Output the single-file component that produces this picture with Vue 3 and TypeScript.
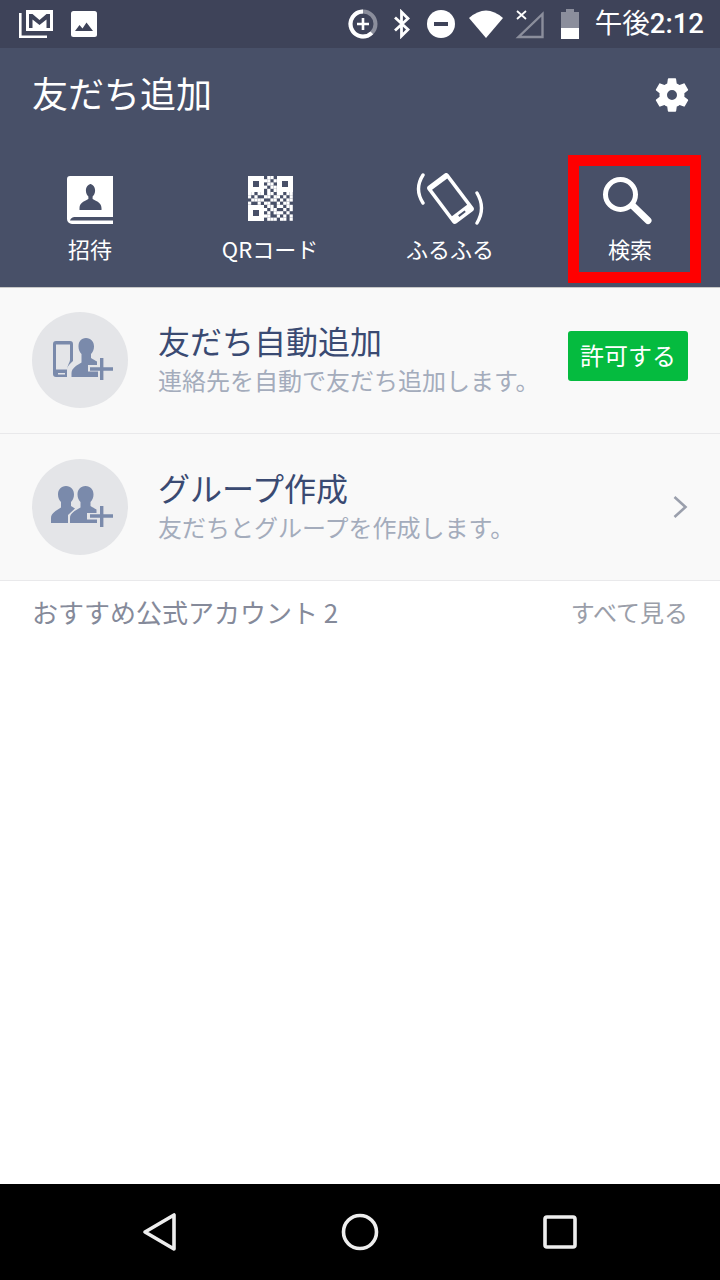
<script setup lang="ts">
const tabs = [
  { id: 'invite', label: '招待' },
  { id: 'qr', label: 'QRコード' },
  { id: 'shake', label: 'ふるふる' },
  { id: 'search', label: '検索' },
]
// QR modules between the three finder squares, [col, row] on a 14x14 grid
const qrRows: Record<number, number[]> = {
  0: [6, 7],
  1: [5, 6, 8],
  2: [6, 7],
  3: [5, 7, 8],
  4: [6, 8],
  5: [0, 1, 3, 4, 6, 7, 9, 10, 12, 13],
  6: [0, 2, 5, 6, 8, 9, 11, 13],
  7: [1, 2, 3, 4, 7, 8, 10, 12, 13],
  8: [0, 3, 5, 6, 9, 11, 12],
  9: [6, 7, 9, 10, 12, 13],
  10: [5, 7, 8, 11, 13],
  11: [6, 8, 9, 10, 12],
  12: [5, 6, 9, 11, 13],
  13: [6, 7, 8, 10, 11, 13],
}
const qrCells = Object.entries(qrRows).flatMap(([row, cols]) =>
  cols.map((col) => ({ x: col * 3.2, y: Number(row) * 3.2 })),
)
</script>

<template>
  <div class="screen">
    <div class="status-bar">
      <svg class="st-icon" width="36" height="30" viewBox="0 0 36 30">
        <path d="M2.300 4v23.700H29" fill="none" stroke="#fff" stroke-width="2.600" />
        <path d="M8 1h27v21H8zM11 5v14h3.500v-8.500l7 5.500 7-5.500V19H32V5h-3.500l-7 6-7-6z" fill="#fff" fill-rule="evenodd" />
      </svg>
      <svg class="st-icon st-photo" width="26" height="26" viewBox="0 0 26 26">
        <rect width="26" height="26" rx="2.500" fill="#fff" />
        <path d="M4 20l4.500-6 3 3.500 4-6L22 20z" fill="#3e4359" />
      </svg>
      <div class="st-spacer"></div>
      <svg class="st-icon" width="30" height="30" viewBox="0 0 30 30">
        <circle cx="15" cy="15" r="12.500" fill="none" stroke="#8b8e9c" stroke-width="4" />
        <path d="M15 2.500A12.500 12.500 0 1 0 23.800 23.900" fill="none" stroke="#fff" stroke-width="4" />
        <path d="M15 9v12M9 15h12" stroke="#fff" stroke-width="2.600" />
      </svg>
      <svg class="st-icon st-bt" width="20" height="30" viewBox="0 0 20 30">
        <path d="M3 8.500l13 12-6.500 6.500V3l6.500 6.500-13 12" fill="none" stroke="#fff" stroke-width="2.800" />
      </svg>
      <svg class="st-icon st-dnd" width="28" height="28" viewBox="0 0 28 28">
        <circle cx="14" cy="14" r="14" fill="#fff" />
        <rect x="7" y="12" width="14" height="4" fill="#3e4359" />
      </svg>
      <svg class="st-icon st-wifi" width="34" height="28" viewBox="0 0 34 28">
        <path d="M0 8Q17-7 34 8L17 28z" fill="#fff" />
      </svg>
      <svg class="st-icon st-signal" width="30" height="30" viewBox="0 0 30 30">
        <path d="M27.500 5v23H3.500z" fill="none" stroke="#8b8e9c" stroke-width="2.400" />
        <path d="M2 2l9 8M11 2l-9 8" stroke="#fff" stroke-width="1.800" />
      </svg>
      <svg class="st-icon st-batt" width="20" height="30" viewBox="0 0 20 30">
        <path d="M6 0h8v3h5v27H1V3h5z" fill="#8b8e9c" />
        <rect x="1" y="19" width="18" height="11" fill="#fff" />
      </svg>
      <span class="st-time">午後<b>2:12</b></span>
    </div>

    <header class="header">
      <div class="title-row">
        <h1 class="title">友だち追加</h1>
        <svg class="gear" width="40" height="40" viewBox="0 0 24 24">
          <path fill="#fff" fill-rule="evenodd" d="M19.400 13c.04-.33.06-.66.06-1s-.02-.67-.06-1l2.100-1.650c.2-.15.25-.42.12-.64l-2-3.460c-.12-.22-.39-.3-.61-.22l-2.490 1c-.52-.4-1.080-.73-1.690-.98l-.38-2.650C14.460 2.180 14.250 2 14 2h-4c-.25 0-.46.18-.49.420l-.38 2.650c-.61.25-1.170.59-1.690.98l-2.490-1c-.23-.09-.49 0-.61.220l-2 3.460c-.13.220-.07.490.12.640L4.570 11c-.04.330-.07.670-.07 1s.03.670.07 1l-2.110 1.650c-.19.150-.25.420-.12.640l2 3.460c.12.220.39.300.61.220l2.490-1c.52.400 1.080.730 1.690.980l.38 2.650c.03.240.24.420.49.420h4c.25 0 .46-.18.49-.42l.38-2.650c.61-.25 1.170-.59 1.690-.98l2.490 1c.23.090.49 0 .61-.22l2-3.460c.12-.22.07-.49-.12-.64L19.400 13zM12 15a3 3 0 1 1 0-6 3 3 0 0 1 0 6z" />
        </svg>
      </div>
      <nav class="tabs">
        <div v-for="tab in tabs" :key="tab.id" class="tab" :class="tab.id">
          <div class="tab-icon">
            <svg v-if="tab.id === 'invite'" width="46" height="48" viewBox="0 0 46 48">
              <path d="M3 0h43v41H8a5 5 0 0 0-5 3.500h43V48H5a5 5 0 0 1-5-5V3a3 3 0 0 1 3-3z" fill="#fff" />
              <path d="M23 7.500c3.500 0 5.600 3 5.600 6.500 0 3-1.300 5-2.500 6v2.500c2 1.500 8.900 3 8.900 9v2H13v-2c0-6 6.900-7.500 8.900-9V20c-1.200-1-2.500-3-2.500-6 0-3.500 2.100-6.500 5.600-6.500z" fill="#485068" transform="translate(-.5 .5)" />
            </svg>
            <svg v-else-if="tab.id === 'qr'" width="45" height="45" viewBox="0 0 45 45">
              <g fill="#fff">
                <path fill-rule="evenodd" d="M0 0h16v16H0zM5 5v6h6V5zM29 0h16v16H29zM34 5v6h6V5zM0 29h16v16H0zM5 34v6h6v-6z" />
                <rect v-for="(cell, i) in qrCells" :key="i" :x="cell.x" :y="cell.y" width="3.200" height="3.200" />
              </g>
            </svg>
            <svg v-else-if="tab.id === 'shake'" width="72" height="56" viewBox="0 0 72 56">
              <g transform="rotate(-37 36.500 25.500)">
                <rect x="23.500" y="2" width="26" height="47" rx="3" fill="#fff" />
                <rect x="27" y="7.500" width="19" height="33" fill="#485068" />
                <rect x="32.500" y="43.500" width="8" height="2" fill="#485068" />
              </g>
              <path d="M9 2Q0 16 9 30M63 20Q72 35 63 50" fill="none" stroke="#fff" stroke-width="3.400" stroke-linecap="round" />
            </svg>
            <svg v-else width="50" height="50" viewBox="0 0 50 50">
              <circle cx="17.500" cy="18.500" r="15" fill="none" stroke="#fff" stroke-width="5" />
              <path d="M30 30l15 14.500" stroke="#fff" stroke-width="7" stroke-linecap="round" />
            </svg>
          </div>
          <span class="tab-label">{{ tab.label }}</span>
        </div>
      </nav>
    </header>

    <main class="content">
      <section class="row first">
        <div class="avatar">
          <svg class="avatar-phone" width="62" height="44" viewBox="0 0 62 44">
            <path fill="#7a8aab" fill-rule="evenodd" d="M4 3h14a3 3 0 0 1 3 3v17c-2 2-5 4-6 8v8H4a3 3 0 0 1-3-3V6a3 3 0 0 1 3-3zM4 6.500v25h11c.5-4.500 3-7.500 3-9.500V6.500zM6 35v1.500h7V35z" />
            <path fill="#7a8aab" d="M34 0c5 0 8 3.600 8 8.500 0 3.200-1.200 5.800-3 7.500v4c2 1.500 4 2.300 6 3.500V27h-9v6.500h10V39H19.500v-4c0-5 6-8 10-10.500V16c-1.800-1.700-3-4.300-3-7.500C26.500 3.600 29 0 34 0z" />
            <path d="M38 31h23M49.700 20v22" stroke="#7a8aab" stroke-width="3.400" fill="none" />
          </svg>
        </div>
        <div class="row-text">
          <div class="row-title">友だち自動追加</div>
          <div class="row-sub">連絡先を自動で友だち追加します。</div>
        </div>
        <button class="allow">許可する</button>
      </section>
      <section class="row second">
        <div class="avatar">
          <svg class="avatar-group" width="62" height="42" viewBox="0 0 62 42">
            <path fill="#7a8aab" d="M15 0c5 0 8 3.600 8 8.500 0 3.200-1.200 5.800-3 7.500v4l4 2.500-7 6.500v8H0v-5c0-5 6-8 10-10.500V16c-1.800-1.700-3-4.300-3-7.500C7 3.600 10 0 15 0z" />
            <path fill="#7a8aab" d="M34.500 0c5 0 8 3.600 8 8.500 0 3.200-1.200 5.800-3 7.500v4c2 1.500 4 2.300 6 3.500V27H36v6.500h10V37H19v-5c0-5 6-8 10.500-10.500V16c-1.800-1.700-3-4.300-3-7.500C26.500 3.600 29.500 0 34.500 0z" />
            <path d="M39 30h23M50.700 20v21" stroke="#7a8aab" stroke-width="3.400" fill="none" />
          </svg>
        </div>
        <div class="row-text">
          <div class="row-title">グループ作成</div>
          <div class="row-sub">友だちとグループを作成します。</div>
        </div>
        <svg class="chevron" width="16" height="24" viewBox="0 0 16 24">
          <path d="M2.500 2l11 10-11 10" fill="none" stroke="#9a9fac" stroke-width="2.600" />
        </svg>
      </section>
      <div class="section-head">
        <span class="section-title">おすすめ公式アカウント 2</span>
        <span class="section-link">すべて見る</span>
      </div>
    </main>

    <footer class="nav-bar">
      <svg width="36" height="40" viewBox="0 0 36 40">
        <path d="M32 3v34L3 20z" fill="none" stroke="#eee" stroke-width="3.600" stroke-linejoin="round" />
      </svg>
      <svg width="40" height="40" viewBox="0 0 40 40">
        <circle cx="20" cy="20" r="16.500" fill="none" stroke="#eee" stroke-width="3.600" />
      </svg>
      <svg width="36" height="36" viewBox="0 0 36 36">
        <rect x="3" y="3" width="30" height="30" rx="2" fill="none" stroke="#eee" stroke-width="3.600" />
      </svg>
    </footer>
  </div>
</template>

<style>
html, body {
  margin: 0;
  background: #fff;
}
</style>

<style scoped>
.screen {
  width: 720px;
  height: 1280px;
  display: flex;
  flex-direction: column;
  font-family: "Noto Sans CJK JP", "Liberation Sans", sans-serif;
  overflow: hidden;
  background: #fff;
}

.status-bar {
  height: 48px;
  background: #3e4359;
  display: flex;
  align-items: center;
  padding: 0 16px 0 18px;
  box-sizing: border-box;
  flex-shrink: 0;
}

.st-icon {
  flex-shrink: 0;
}

.st-photo {
  margin-left: 17px;
}

.st-spacer {
  flex: 1;
}

.st-bt {
  margin-left: 14px;
}

.st-dnd {
  margin-left: 15px;
}

.st-wifi {
  margin-left: 14px;
}

.st-signal {
  margin-left: 12px;
}

.st-batt {
  margin-left: 15px;
}

.st-time {
  margin-left: 15px;
  color: #fff;
  font-size: 27.5px;
  line-height: 48px;
  font-family: Roboto, "Noto Sans CJK JP", sans-serif;
  white-space: nowrap;
}

.st-time b {
  font-weight: 500;
}

.header {
  height: 239px;
  background: #485068;
  flex-shrink: 0;
  display: flex;
  flex-direction: column;
  box-sizing: border-box;
}

.title-row {
  height: 94px;
  display: flex;
  align-items: center;
  justify-content: space-between;
  padding: 0 28px 0 32px;
  flex-shrink: 0;
}

.title {
  margin: 0 0 6px;
  color: #fff;
  font-size: 36px;
  font-weight: 400;
  line-height: 50px;
}

.gear {
  flex-shrink: 0;
}

.tabs {
  display: grid;
  grid-template-columns: repeat(4, 180px);
  flex: 1;
}

.tab {
  display: flex;
  flex-direction: column;
  align-items: center;
  position: relative;
}

.tab-icon {
  height: 96px;
  padding-top: 34px;
  box-sizing: border-box;
  display: flex;
  justify-content: center;
}

.tab.shake svg {
  margin-top: -3px;
}

.tab.search svg {
  margin-left: -4px;
}

.tab.search::after {
  content: "";
  position: absolute;
  left: 28px;
  right: 19px;
  top: 13px;
  bottom: 4px;
  border: 11px solid #ff0000;
}

.tab-label {
  color: #fff;
  font-size: 22px;
  line-height: 30px;
  margin-top: -5px;
}

.content {
  flex: 1;
  display: flex;
  flex-direction: column;
  border-top: 1px solid #c8c8c8;
}

.row {
  height: 146px;
  background: #f9f9f9;
  border-bottom: 1px solid #e9e9eb;
  display: flex;
  align-items: center;
  padding: 0 32px;
  box-sizing: border-box;
  flex-shrink: 0;
}

.row.first {
  padding-bottom: 1px;
}

.row.second {
  height: 147px;
}

.avatar {
  width: 96px;
  height: 96px;
  border-radius: 50%;
  background: #e4e5e8;
  display: flex;
  align-items: center;
  justify-content: center;
  flex-shrink: 0;
}

.avatar-phone {
  margin-left: 6px;
}

.avatar-group {
  margin-left: 4px;
}

.row-text {
  flex: 1;
  margin: 0 0 6px 30px;
  min-width: 0;
}

.row-title {
  color: #3a4a72;
  font-size: 32px;
  line-height: 40px;
}

.row-sub {
  color: #a4acbc;
  font-size: 24px;
  line-height: 30px;
  margin-top: 5px;
}

.allow {
  width: 120px;
  height: 50px;
  margin-bottom: 8px;
  border: 0;
  border-radius: 3px;
  background: #05bb3f;
  color: #fff;
  font-family: inherit;
  font-size: 24px;
  padding: 0 0 3px;
}

.section-head {
  display: flex;
  justify-content: space-between;
  align-items: center;
  padding: 0 32px 3px;
  height: 64px;
  box-sizing: border-box;
}

.section-title {
  color: #858a9a;
  font-size: 26px;
}

.section-link {
  color: #9a9ea9;
  font-size: 24px;
}

.nav-bar {
  height: 96px;
  background: #000;
  display: flex;
  align-items: center;
  justify-content: center;
  gap: 162px;
  flex-shrink: 0;
}
</style>
